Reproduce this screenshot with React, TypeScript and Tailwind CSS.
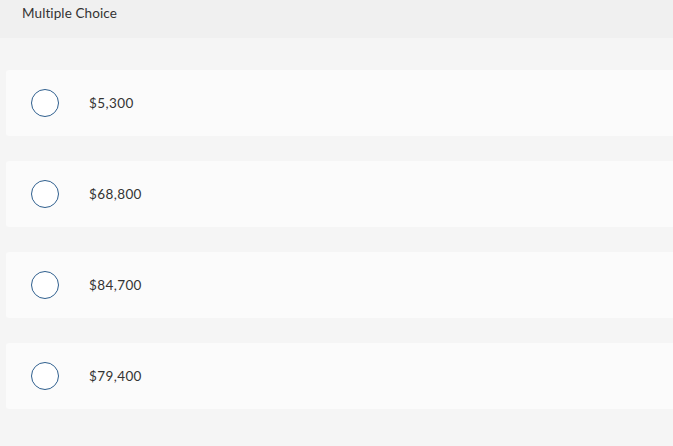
import React from "react";

const options = ["$5,300", "$68,800", "$84,700", "$79,400"];

export default function App() {
  return (
    <div className="h-[446px] w-full overflow-hidden bg-[#f5f5f5] text-[#333]" style={{ fontFamily: "Lato, 'Open Sans', sans-serif" }}>
      <div className="h-[38px] bg-[#f0f0f0] pl-[22px] pt-[5px] text-[13.5px] leading-[16px] tracking-[0.1px] text-[#333]">
        Multiple Choice
      </div>
      <div className="flex flex-col gap-[25px] pl-[6px] pt-[32px]">
        {options.map((o) => (
          <div key={o} className="flex h-[66px] items-center rounded-l-[3px] bg-[#fbfbfb] pl-[25px]">
            <div className="h-[28px] w-[28px] rounded-full border-[1.5px] border-[#2f5f8e] bg-white" />
            <span className="ml-[30px] text-[13.5px] tracking-[0.4px] text-[#333]">{o}</span>
          </div>
        ))}
      </div>
    </div>
  );
}
